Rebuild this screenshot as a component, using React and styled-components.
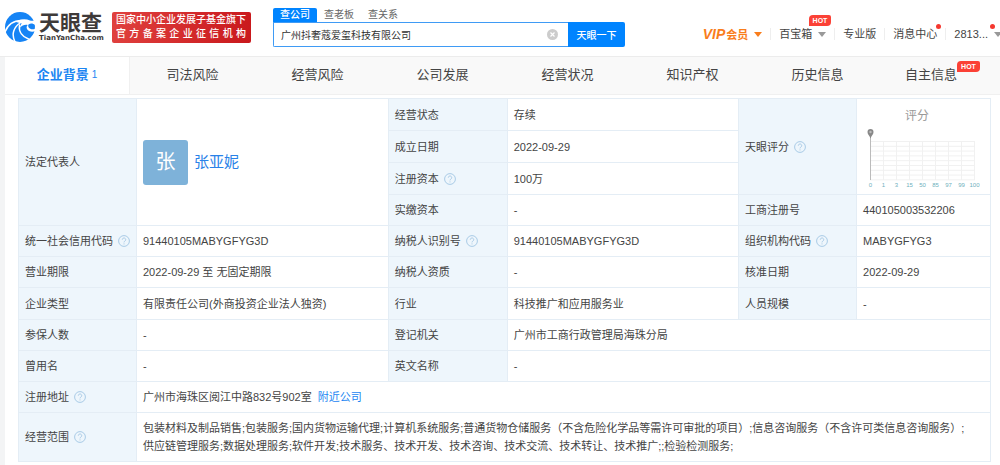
import React from "react";
import styled, { createGlobalStyle, css } from "styled-components";

const GlobalStyle = createGlobalStyle`
  * {
    box-sizing: border-box;
  }

  body {
    margin: 0;
    background: #f3f4f5;
    color: #444;
    font-family: "Liberation Sans", "Noto Sans CJK SC", sans-serif;
    font-size: 11px;
    line-height: 18px;
  }

  a {
    color: inherit;
    text-decoration: none;
  }

  button, input {
    font-family: inherit;
  }
`;

//Header
const Page = styled.div`
  overflow: hidden;
`;

const Header = styled.header`
  display: flex;
  align-items: flex-start;
  height: 57px;
  padding: 8px 0 0 4px;
  background: #fff;
  border-bottom: 1px solid #ececec;
`;

const Brand = styled.a`
  display: flex;
  align-items: center;
  flex: none;
  width: 108px;
  height: 38px;
`;

const BrandText = styled.span`
  display: flex;
  flex-direction: column;
  margin-left: 3px;
  color: #3e3a39;
`;

const BrandName = styled.span`
  font-size: 21px;
  font-weight: 700;
  line-height: 22px;
`;

const BrandDomain = styled.span`
  font-family: "DejaVu Sans", sans-serif;
  font-size: 7px;
  font-weight: 700;
  line-height: 8px;
`;

const Official = styled.div`
  flex: none;
  width: 139px;
  height: 31px;
  margin-top: 4px;
  padding: 1px 5px 0 4px;
  border-radius: 2px;
  background: linear-gradient(100deg, #e0413f, #c9181c);
  color: #fff;
  font-size: 10px;
  font-weight: 500;
  line-height: 14px;
`;

const OfficialLine = styled.div`
  text-align-last: justify;
  white-space: nowrap;
`;

const Search = styled.form`
  flex: none;
  width: 352px;
  margin-left: 22px;
`;

const SearchTabs = styled.div`
  display: flex;
`;

const SearchTab = styled.button`
  height: 14px;
  padding: 0 7px;
  border: 0;
  border-radius: 2px 2px 0 0;
  background: ${props => (props.$active ? "#0084ff" : "transparent")};
  color: ${props => (props.$active ? "#fff" : "#666")};
  font-size: 10px;
  font-weight: ${props => (props.$active ? 500 : 400)};
  line-height: 14px;
`;

const SearchBar = styled.div`
  display: flex;
  height: 25px;
`;

const SearchField = styled.label`
  display: flex;
  align-items: center;
  flex: 1;
  padding: 0 10px 0 7px;
  border: 1px solid #3f9bf5;
  border-right: 0;
  border-radius: 0 0 0 2px;
`;

const SearchInput = styled.input`
  flex: 1;
  min-width: 0;
  padding: 0;
  border: 0;
  outline: 0;
  background: none;
  color: #333;
  font-size: 10px;
`;

const ClearButton = styled.button`
  display: flex;
  padding: 0;
  border: 0;
  background: none;
`;

const SearchButton = styled.button`
  width: 57px;
  padding: 0;
  border: 0;
  border-radius: 0 2px 2px 0;
  background: #0084ff;
  color: #fff;
  font-size: 10px;
  font-weight: 500;
`;

const Nav = styled.nav`
  display: flex;
  align-items: center;
  flex: none;
  height: 18px;
  margin: 17px -2px 0 auto;
`;

const NavItem = styled.a`
  position: relative;
  display: flex;
  align-items: center;
  gap: 6px;
  height: 12px;
  padding: 0 8px;
  color: #444;
  white-space: nowrap;

  & + & {
    border-left: 1px solid #eee;
  }

  &:last-child {
    padding-right: 0;
  }
`;

const Vip = styled.span`
  color: #f97d1c;
  font-weight: 700;

  em {
    margin-right: 1px;
    font-size: 14px;
  }
`;

const Caret = styled.span`
  border: 4px solid transparent;
  border-top: 5px solid ${props => props.$color || "#999"};
  border-bottom: 0;
`;

const Dot = styled.span`
  position: absolute;
  top: -4px;
  right: ${props => props.$right}px;
  width: 5px;
  height: 5px;
  border-radius: 50%;
  background: #f5382f;
`;

const hot = css`
  height: 11px;
  padding: 0 4px;
  border-radius: 4px 2px 4px 0;
  background: #fb4136;
  color: #fff;
  font-size: 7px;
  font-weight: 700;
  line-height: 11px;
`;

const NavHot = styled.span`
  ${hot}
  position: absolute;
  top: -13px;
  right: 3px;
`;

//Section tabs
const Panel = styled.main`
  margin-left: 5px;
  background: #fff;
`;

const Tabs = styled.nav`
  display: grid;
  grid-template-columns: repeat(8, 1fr);
  height: 38px;
  margin-right: -5px;
  border-bottom: 1px solid #f0f0f0;
  background: #f9f9f9;
`;

const Tab = styled.a`
  display: flex;
  align-items: center;
  justify-content: center;
  padding-bottom: 2px;
  color: #444;
  font-size: 13px;

  ${props =>
    props.$active &&
    css`
      border-right: 1px solid #f0f0f0;
      background: #fff;
      color: #1c86f2;
      font-weight: 700;
    `}
`;

const TabCount = styled.small`
  margin-left: 3px;
  font-size: 10px;
  font-weight: 400;
`;

const TabHot = styled.span`
  ${hot}
  align-self: flex-start;
  margin-top: 4px;
`;

//Company table
const Info = styled.div`
  padding: 3px 9px 4px 13px;
`;

const Table = styled.table`
  width: 100%;
  border-collapse: collapse;
  table-layout: fixed;
`;

const cell = css`
  height: ${props => props.$height || 31}px;
  padding: 0 6px;
  border: 1px solid #e4edf5;
  text-align: left;
  font-weight: 400;
`;

const Label = styled.th`
  ${cell}
  padding-right: 0;
  background: #eef6fc;
`;

const Value = styled.td`
  ${cell}
`;

const ScopeValue = styled(Value)`
  padding-right: 16px;
`;

const HelpIcon = styled.svg`
  width: 12px;
  height: 12px;
  margin-left: 5px;
  vertical-align: -2px;
`;

const Person = styled.div`
  display: flex;
  align-items: center;
  gap: 6px;
`;

const Avatar = styled.span`
  width: 45px;
  height: 45px;
  border-radius: 3px;
  background: #7eb2d9;
  color: #fff;
  font-size: 20px;
  line-height: 44px;
  text-align: center;
`;

const PersonLink = styled.a`
  color: #2a82e8;
  font-size: 15px;
`;

const NearbyLink = styled.a`
  margin-left: 6px;
  color: #1c86f2;
`;

const Score = styled.figure`
  margin: 0;

  figcaption {
    width: 108px;
    margin-top: 4px;
    color: #999;
    font-size: 12px;
    text-align: center;
  }

  svg {
    display: block;
    margin-top: 2px;
  }
`;

const scoreTicks = [0, 1, 3, 15, 50, 85, 97, 99, 100];

const sections = [
  { title: "企业背景", count: 1, active: true },
  { title: "司法风险" },
  { title: "经营风险" },
  { title: "公司发展" },
  { title: "经营状况" },
  { title: "知识产权" },
  { title: "历史信息" },
  { title: "自主信息", hot: true }
];

const Help = () => (
  <HelpIcon viewBox="0 0 12 12" fill="none" stroke="#a9cbe6">
    <circle cx="6" cy="6" r="5.4" />
    <path d="M4.3 4.7a1.7 1.7 0 1 1 2.6 1.4c-.6.4-.9.6-.9 1.3M6 8.4v1" />
  </HelpIcon>
);

const Logo = () => (
  <svg width="32" height="32" viewBox="0 0 32 32">
    <circle cx="16" cy="16" r="15" fill="#1684f5" />
    <g fill="none" stroke="#fff" strokeLinecap="round">
      <path d="M1 21C4 13 10 9 19 9.500" strokeWidth="1.5" />
      <path d="M11 31C7 23 10 16 16 12" strokeWidth="1.5" />
      <path d="M15.500 14c-1 7 3 12 9 14" strokeWidth="1.5" />
    </g>
    <path
      d="M12 11c5-3.500 10-3 14-1.500 1.500.6 3.500.4 5.500-.5v11c-3 1.500-7 .8-8.500-2-.8-1.600-.3-3 .8-4-3-.8-5.800.6-7.800 2.500.2-2 .8-3 1.800-4-2-.6-4-.8-5.800-1.500z"
      fill="#fff"
    />
    <path d="M24.500 13.500c2-1.500 4.500-1.500 6.300.5.300 1.500.2 2.800-.1 4-2.500.8-5 0-6-1.500-.6-1-.7-2-.2-3z" fill="#1684f5" />
  </svg>
);

const ScoreChart = () => (
  <svg width="120" height="64" viewBox="0 0 120 64">
    <g stroke="#f1f1f1">
      {scoreTicks.map((tick, i) => (
        <path key={tick} d={`M${7.5 + i * 13} 14V53`} />
      ))}
      {scoreTicks.map((tick, i) => (
        <path key={tick} d={`M7 ${14.5 + i * 4.8}H112`} />
      ))}
    </g>
    <path d="M7.5 8V53" stroke="#bbb" />
    <path d="M7.5 11.5C6.5 8.5 4.5 7.5 4.5 5a3 3 0 0 1 6 0c0 2.500-2 3.500-3 6.500z" fill="#888" />
    <circle cx="7.5" cy="5" r="1.2" fill="#bbb" />
    <g fill="#6fb0bd" fontSize="6" textAnchor="middle">
      {scoreTicks.map((tick, i) => (
        <text key={tick} x={7.5 + i * 13} y="60">{tick}</text>
      ))}
    </g>
  </svg>
);

const App = () => (
  <>
    <GlobalStyle />
    <Page>
      <Header>
        <Brand href="#">
          <Logo />
          <BrandText>
            <BrandName>天眼查</BrandName>
            <BrandDomain>TianYanCha.com</BrandDomain>
          </BrandText>
        </Brand>
        <Official>
          <OfficialLine>国家中小企业发展子基金旗下</OfficialLine>
          <OfficialLine>官方备案企业征信机构</OfficialLine>
        </Official>
        <Search onSubmit={e => e.preventDefault()}>
          <SearchTabs>
            <SearchTab type="button" $active>查公司</SearchTab>
            <SearchTab type="button">查老板</SearchTab>
            <SearchTab type="button">查关系</SearchTab>
          </SearchTabs>
          <SearchBar>
            <SearchField>
              <SearchInput aria-label="查公司" defaultValue="广州抖奢蔻爱玺科技有限公司" />
              <ClearButton type="reset" aria-label="清除">
                <svg width="11" height="11" viewBox="0 0 11 11">
                  <circle cx="5.5" cy="5.5" r="5.5" fill="#ccc" />
                  <path d="M3.5 3.5l4 4M7.5 3.5l-4 4" stroke="#fff" strokeWidth="1.2" />
                </svg>
              </ClearButton>
            </SearchField>
            <SearchButton type="submit">天眼一下</SearchButton>
          </SearchBar>
        </Search>
        <Nav>
          <NavItem href="#">
            <Vip><em>VIP</em>会员</Vip>
            <Caret $color="#f97d1c" />
          </NavItem>
          <NavItem href="#">
            百宝箱
            <Caret />
            <NavHot>HOT</NavHot>
          </NavItem>
          <NavItem href="#">专业版</NavItem>
          <NavItem href="#">
            消息中心
            <Dot $right={4} />
          </NavItem>
          <NavItem href="#">
            2813...
            <Dot $right={7} />
            <Caret />
          </NavItem>
        </Nav>
      </Header>

      <Panel>
        <Tabs>
          {sections.map(item => (
            <Tab key={item.title} href="#" $active={item.active}>
              {item.title}
              {item.count && <TabCount>{item.count}</TabCount>}
              {item.hot && <TabHot>HOT</TabHot>}
            </Tab>
          ))}
        </Tabs>

        <Info>
          <Table>
            <colgroup>
              <col style={{ width: "118px" }} />
              <col style={{ width: "25.9%" }} />
              <col style={{ width: "119px" }} />
              <col style={{ width: "23.8%" }} />
              <col style={{ width: "118px" }} />
              <col />
            </colgroup>
            <tbody>
              <tr>
                <Label rowSpan={4}>法定代表人</Label>
                <Value rowSpan={4}>
                  <Person>
                    <Avatar>张</Avatar>
                    <PersonLink href="#">张亚妮</PersonLink>
                  </Person>
                </Value>
                <Label $height={32}>经营状态</Label>
                <Value>存续</Value>
                <Label rowSpan={3}>天眼评分<Help /></Label>
                <Value rowSpan={3}>
                  <Score>
                    <figcaption>评分</figcaption>
                    <ScoreChart />
                  </Score>
                </Value>
              </tr>
              <tr>
                <Label $height={32}>成立日期</Label>
                <Value>2022-09-29</Value>
              </tr>
              <tr>
                <Label $height={32}>注册资本<Help /></Label>
                <Value>100万</Value>
              </tr>
              <tr>
                <Label>实缴资本</Label>
                <Value>-</Value>
                <Label>工商注册号</Label>
                <Value>440105003532206</Value>
              </tr>
              <tr>
                <Label>统一社会信用代码<Help /></Label>
                <Value>91440105MABYGFYG3D</Value>
                <Label>纳税人识别号<Help /></Label>
                <Value>91440105MABYGFYG3D</Value>
                <Label>组织机构代码<Help /></Label>
                <Value>MABYGFYG3</Value>
              </tr>
              <tr>
                <Label>营业期限</Label>
                <Value>2022-09-29 至 无固定期限</Value>
                <Label>纳税人资质</Label>
                <Value>-</Value>
                <Label>核准日期</Label>
                <Value>2022-09-29</Value>
              </tr>
              <tr>
                <Label $height={32}>企业类型</Label>
                <Value>有限责任公司(外商投资企业法人独资)</Value>
                <Label>行业</Label>
                <Value>科技推广和应用服务业</Value>
                <Label>人员规模</Label>
                <Value>-</Value>
              </tr>
              <tr>
                <Label>参保人数</Label>
                <Value>-</Value>
                <Label>登记机关</Label>
                <Value colSpan={3}>广州市工商行政管理局海珠分局</Value>
              </tr>
              <tr>
                <Label>曾用名</Label>
                <Value>-</Value>
                <Label>英文名称</Label>
                <Value colSpan={3}>-</Value>
              </tr>
              <tr>
                <Label>注册地址<Help /></Label>
                <Value colSpan={5}>
                  广州市海珠区阅江中路832号902室
                  <NearbyLink href="#">附近公司</NearbyLink>
                </Value>
              </tr>
              <tr>
                <Label $height={49}>经营范围<Help /></Label>
                <ScopeValue colSpan={5}>
                  包装材料及制品销售;包装服务;国内货物运输代理;计算机系统服务;普通货物仓储服务（不含危险化学品等需许可审批的项目）;信息咨询服务（不含许可类信息咨询服务）;供应链管理服务;数据处理服务;软件开发;技术服务、技术开发、技术咨询、技术交流、技术转让、技术推广;;检验检测服务;
                </ScopeValue>
              </tr>
            </tbody>
          </Table>
        </Info>
      </Panel>
    </Page>
  </>
);

export default App;
